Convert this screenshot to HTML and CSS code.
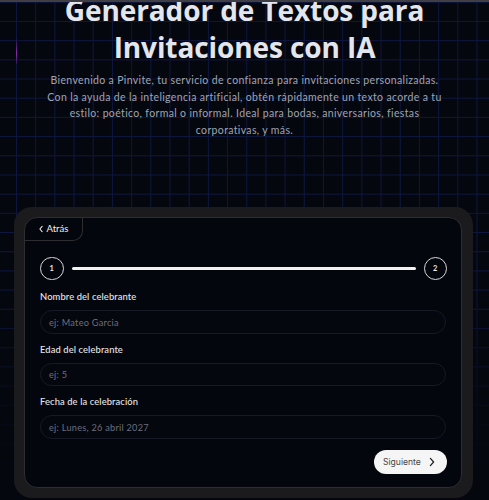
FILE: index.html
```html
<!DOCTYPE html>
<html lang="es">
<head>
<meta charset="utf-8">
<title>Pinvite</title>
<link rel="stylesheet" href="styles.css">
</head>
<body>
<div class="top-bar"></div>
<div class="beam"></div>
<header class="hero">
  <h1 class="hero-title">Generador de Textos para<br>Invitaciones con IA</h1>
  <p class="hero-text">Bienvenido a Pinvite, tu servicio de confianza para invitaciones personalizadas.<br>Con la ayuda de la inteligencia artificial, obtén rápidamente un texto acorde a tu<br>estilo: poético, formal o informal. Ideal para bodas, aniversarios, fiestas<br>corporativas, y más.</p>
</header>
<main class="card-outer">
  <div class="card">
    <button class="back-tab" type="button">
      <svg class="back-icon" viewBox="0 0 8 10" width="6" height="8"><path d="M5.5 1.5 L2.5 5 L5.5 8.5" fill="none" stroke="#f0f0f0" stroke-width="1.4" stroke-linecap="round" stroke-linejoin="round"/></svg>
      <span>Atrás</span>
    </button>
    <div class="card-body">
      <div class="steps">
        <div class="step">1</div>
        <div class="step-line"></div>
        <div class="step">2</div>
      </div>
      <div class="field">
        <label class="field-label">Nombre del celebrante</label>
        <div class="field-input">ej: Mateo Garcia</div>
      </div>
      <div class="field">
        <label class="field-label">Edad del celebrante</label>
        <div class="field-input">ej: 5</div>
      </div>
      <div class="field">
        <label class="field-label">Fecha de la celebración</label>
        <div class="field-input">ej: Lunes, 26 abril 2027</div>
      </div>
      <div class="actions">
        <button class="next-btn" type="button">
          <span>Siguiente</span>
          <svg viewBox="0 0 10 12" width="8" height="10"><path d="M3 1.5 L7 6 L3 10.5" fill="none" stroke="#222" stroke-width="1.6" stroke-linecap="round" stroke-linejoin="round"/></svg>
        </button>
      </div>
    </div>
  </div>
</main>
</body>
</html>
```
FILE: styles.css
```css
* { box-sizing: border-box; }
html, body { height: 100%; }
body {
  margin: 0;
  overflow: hidden;
  font-family: "Lato", "Noto Sans", sans-serif;
  color: #e8e9ee;
  background-color: #05070f;
  background-image:
    linear-gradient(to bottom, rgba(5,7,15,0) 0px, rgba(5,7,15,0) 280px, rgba(5,7,15,0.85) 420px, rgba(5,7,15,1) 480px),
    linear-gradient(to right, #0e1640 1px, transparent 1px),
    linear-gradient(to bottom, #0e1640 1px, transparent 1px);
  background-size: 100% 100%, 19.2px 19.2px, 19.2px 19.2px;
  background-position: 0 0, 16px 0, 0 1.8px;
}
.top-bar {
  position: fixed;
  top: 0; left: 0; right: 0;
  height: 2px;
  background: #3e3e44;
  z-index: 5;
}
.beam {
  position: absolute;
  left: 16px; top: 38px;
  width: 1px; height: 26px;
  background: linear-gradient(to bottom, rgba(140,40,170,0), #8a2ea6 60%, rgba(140,40,170,0.2));
}
.hero {
  text-align: center;
  padding: 0 10px;
}
.hero-title {
  margin: -8px 0 0;
  font-family: "Open Sans", "Lato", sans-serif;
  font-size: 28px;
  line-height: 36.5px;
  font-weight: 700;
  letter-spacing: -0.1px;
  color: #e4e6ed;
}
.hero-text {
  margin: 7px 0 0;
  font-size: 10.5px;
  line-height: 16.6px;
  letter-spacing: 0.35px;
  color: #a0a4b3;
  white-space: nowrap;
}
.card-outer {
  width: 459px;
  margin: 68.5px 0 0 14px;
  padding: 10px 11px 10px 9.5px;
  background: #1b1b1e;
  border-radius: 18px;
}
.card {
  background: #04060d;
  border: 1px solid #2c2c31;
  border-radius: 13px;
  overflow: hidden;
}
.back-tab {
  display: flex;
  align-items: center;
  gap: 3px;
  width: 58px;
  height: 23px;
  padding: 0 0 0 13px;
  background: transparent;
  border: none;
  border-right: 1px solid #2c2c31;
  border-bottom: 1px solid #2c2c31;
  border-bottom-right-radius: 10px;
  font-family: "Lato", "Noto Sans", sans-serif;
  font-size: 9.5px;
  color: #f0f0f0;
}
.card-body {
  padding: 16px 14px 13px 15.5px;
}
.steps {
  display: flex;
  align-items: center;
  gap: 8px;
}
.step {
  flex: 0 0 auto;
  width: 23.5px;
  height: 23.5px;
  border: 1.5px solid #d8d8d8;
  border-radius: 50%;
  display: flex;
  align-items: center;
  justify-content: center;
  font-size: 7.5px;
  font-weight: 700;
  color: #e8e8e8;
}
.step-line {
  flex: 1 1 auto;
  height: 2.5px;
  background: #f2f2f2;
  border-radius: 2px;
}
.field {
  display: flex;
  flex-direction: column;
  margin-top: 11px;
}
.field + .field { margin-top: 10px; }
.field-label {
  font-size: 9.4px;
  line-height: 12px;
  font-weight: 500;
  letter-spacing: 0.1px;
  color: #e6e6e8;
  margin-bottom: 7px;
}
.field-input {
  height: 23.5px;
  border: 1px solid #161a27;
  border-radius: 12px;
  background: #05070f;
  padding: 0 0 0 8px;
  display: flex;
  align-items: center;
  font-size: 9.2px;
  letter-spacing: 0.25px;
  color: #6b6f7d;
  margin-right: 1px;
}
.actions {
  display: flex;
  justify-content: flex-end;
  margin-top: 11.5px;
}
.next-btn {
  display: flex;
  align-items: center;
  gap: 7px;
  width: 73px;
  height: 23.5px;
  padding: 0 0 0 9px;
  background: #f5f5f5;
  border: none;
  border-radius: 12px;
  font-family: "Inter", "Noto Sans", sans-serif;
  font-size: 8.6px;
  color: #444448;
}
```
